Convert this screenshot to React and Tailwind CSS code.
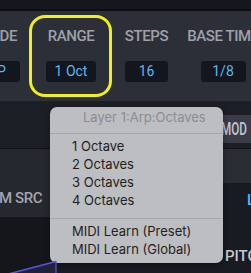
import React from 'react';

const labelFont = { fontFamily: 'Roboto, "Liberation Sans", sans-serif' };

// one column of the arp strip: a label over a value box
const Param = ({ label, value, width, boxWidth }) => (
  <div className={`flex flex-col items-center shrink-0 ${width}`}>
    <div className="h-[18px] leading-[18px] text-[15px] font-medium tracking-[-0.4px] text-[#9ea1ab] whitespace-nowrap">{label}</div>
    <div className={`mt-[16px] h-[21px] ${boxWidth} rounded-[3px] bg-[#14161d] flex items-center justify-center text-[14px] text-[#5bb8f5] whitespace-nowrap`}>
      {value}
    </div>
  </div>
);

const menuItems = ['1 Octave', '2 Octaves', '3 Octaves', '4 Octaves'];
const learnItems = ['MIDI Learn (Preset)', 'MIDI Learn (Global)'];

const ContextMenu = () => (
  <div
    className="absolute left-[50px] top-[107px] w-[173px] h-[156px] rounded-[7px] bg-[#bdbec2] shadow-[0_2px_6px_rgba(0,0,0,0.35)]"
    style={{ fontFamily: 'Inter, "Noto Sans", sans-serif' }}
  >
    <div className="h-[20px] leading-[20px] pl-[33px] text-[13px] text-[#8b8c91] whitespace-nowrap">Layer 1:Arp:Octaves</div>
    <div className="mt-[6px] h-px bg-[#a6a7ab]" />
    <div className="mt-[3px]">
      {menuItems.map((item) => (
        <div key={item} className="h-[18px] leading-[18px] pl-[22px] text-[13px] text-[#1f1f21]">{item}</div>
      ))}
    </div>
    <div className="mt-[9px] h-px bg-[#a6a7ab]" />
    <div className="mt-[3px]">
      {learnItems.map((item) => (
        <div key={item} className="h-[18px] leading-[18px] pl-[22px] text-[13px] text-[#1f1f21] whitespace-nowrap">{item}</div>
      ))}
    </div>
  </div>
);

export default function App() {
  return (
    <div className="relative w-[251px] h-[273px] overflow-hidden bg-[#191b22]" style={labelFont}>
      {/* top strip */}
      <div className="h-[9px] bg-[#15171d]" />
      <div className="h-[2px] bg-[#0e0f13]" />

      {/* arp params panel */}
      <div className="h-[90px] bg-[#2c2f37] pt-[16px] flex ml-[-40px]">
        <Param label="MODE" value="UP" width="w-[74px]" boxWidth="w-[45px]" />
        <Param label="RANGE" value="1 Oct" width="w-[74px]" boxWidth="w-[50px]" />
        <Param label="STEPS" value="16" width="w-[77px]" boxWidth="w-[43px]" />
        <Param label="BASE TIME" value="1/8" width="w-[76px]" boxWidth="w-[45px]" />
      </div>

      {/* lower sections */}
      <div className="flex h-[172px]">
        <div className="w-[50px] shrink-0 flex flex-col">
          <div className="h-[47px] bg-[#1d1f27]" />
          <div className="h-px bg-[#111216]" />
          <div className="h-[68px] bg-[#26282f] pt-[40px]">
            <div className="ml-[-1px] h-[18px] leading-[18px] text-[15px] font-medium tracking-[-0.4px] text-[#a3a5ad] whitespace-nowrap">M SRC</div>
          </div>
          <div className="flex-1 bg-[#15161c] flex flex-col justify-end">
            <svg width="80" height="12" viewBox="0 0 80 12" className="relative z-10 overflow-visible">
              <polygon points="13,12 50,2 56,0 56,12" fill="#2a2850" opacity="0.6" />
              <line x1="10" y1="12.5" x2="56" y2="0.5" stroke="#5b55d6" strokeWidth="1.6" />
              <line x1="56" y1="0" x2="56" y2="12" stroke="#5b55d6" strokeWidth="1.2" />
            </svg>
          </div>
        </div>
        <div className="flex-1 min-w-0 overflow-hidden flex flex-col">
          <div className="h-[47px] bg-[#1d1f27] pt-[14px]">
            <div className="h-[28px] bg-[#3a3d48] flex items-center justify-end pr-[4px]">
              <span className="inline-block origin-right scale-x-[0.65] text-[18px] font-medium leading-none text-[#c5c7cf]">MOD</span>
            </div>
          </div>
          <div className="h-px bg-[#111216]" />
          <div className="h-[34px] bg-[#2b2d35]" />
          <div className="flex-1 bg-[#191b22] flex flex-col items-end">
            <div className="mt-[8px] h-[18px] leading-[18px] text-[15px] font-medium text-[#5bb8f5] w-[4px] overflow-hidden">L</div>
            <div className="mt-[38px] h-[18px] leading-[18px] text-[15px] font-medium text-[#c8cad0] self-start ml-[175px] whitespace-nowrap">PITCH</div>
          </div>
        </div>
      </div>

      {/* highlight ring around RANGE */}
      <div className="absolute left-[29px] top-[15px] w-[83px] h-[82px] rounded-[16px] border-[3px] border-[#f0f01a]" />

      <ContextMenu />
    </div>
  );
}
